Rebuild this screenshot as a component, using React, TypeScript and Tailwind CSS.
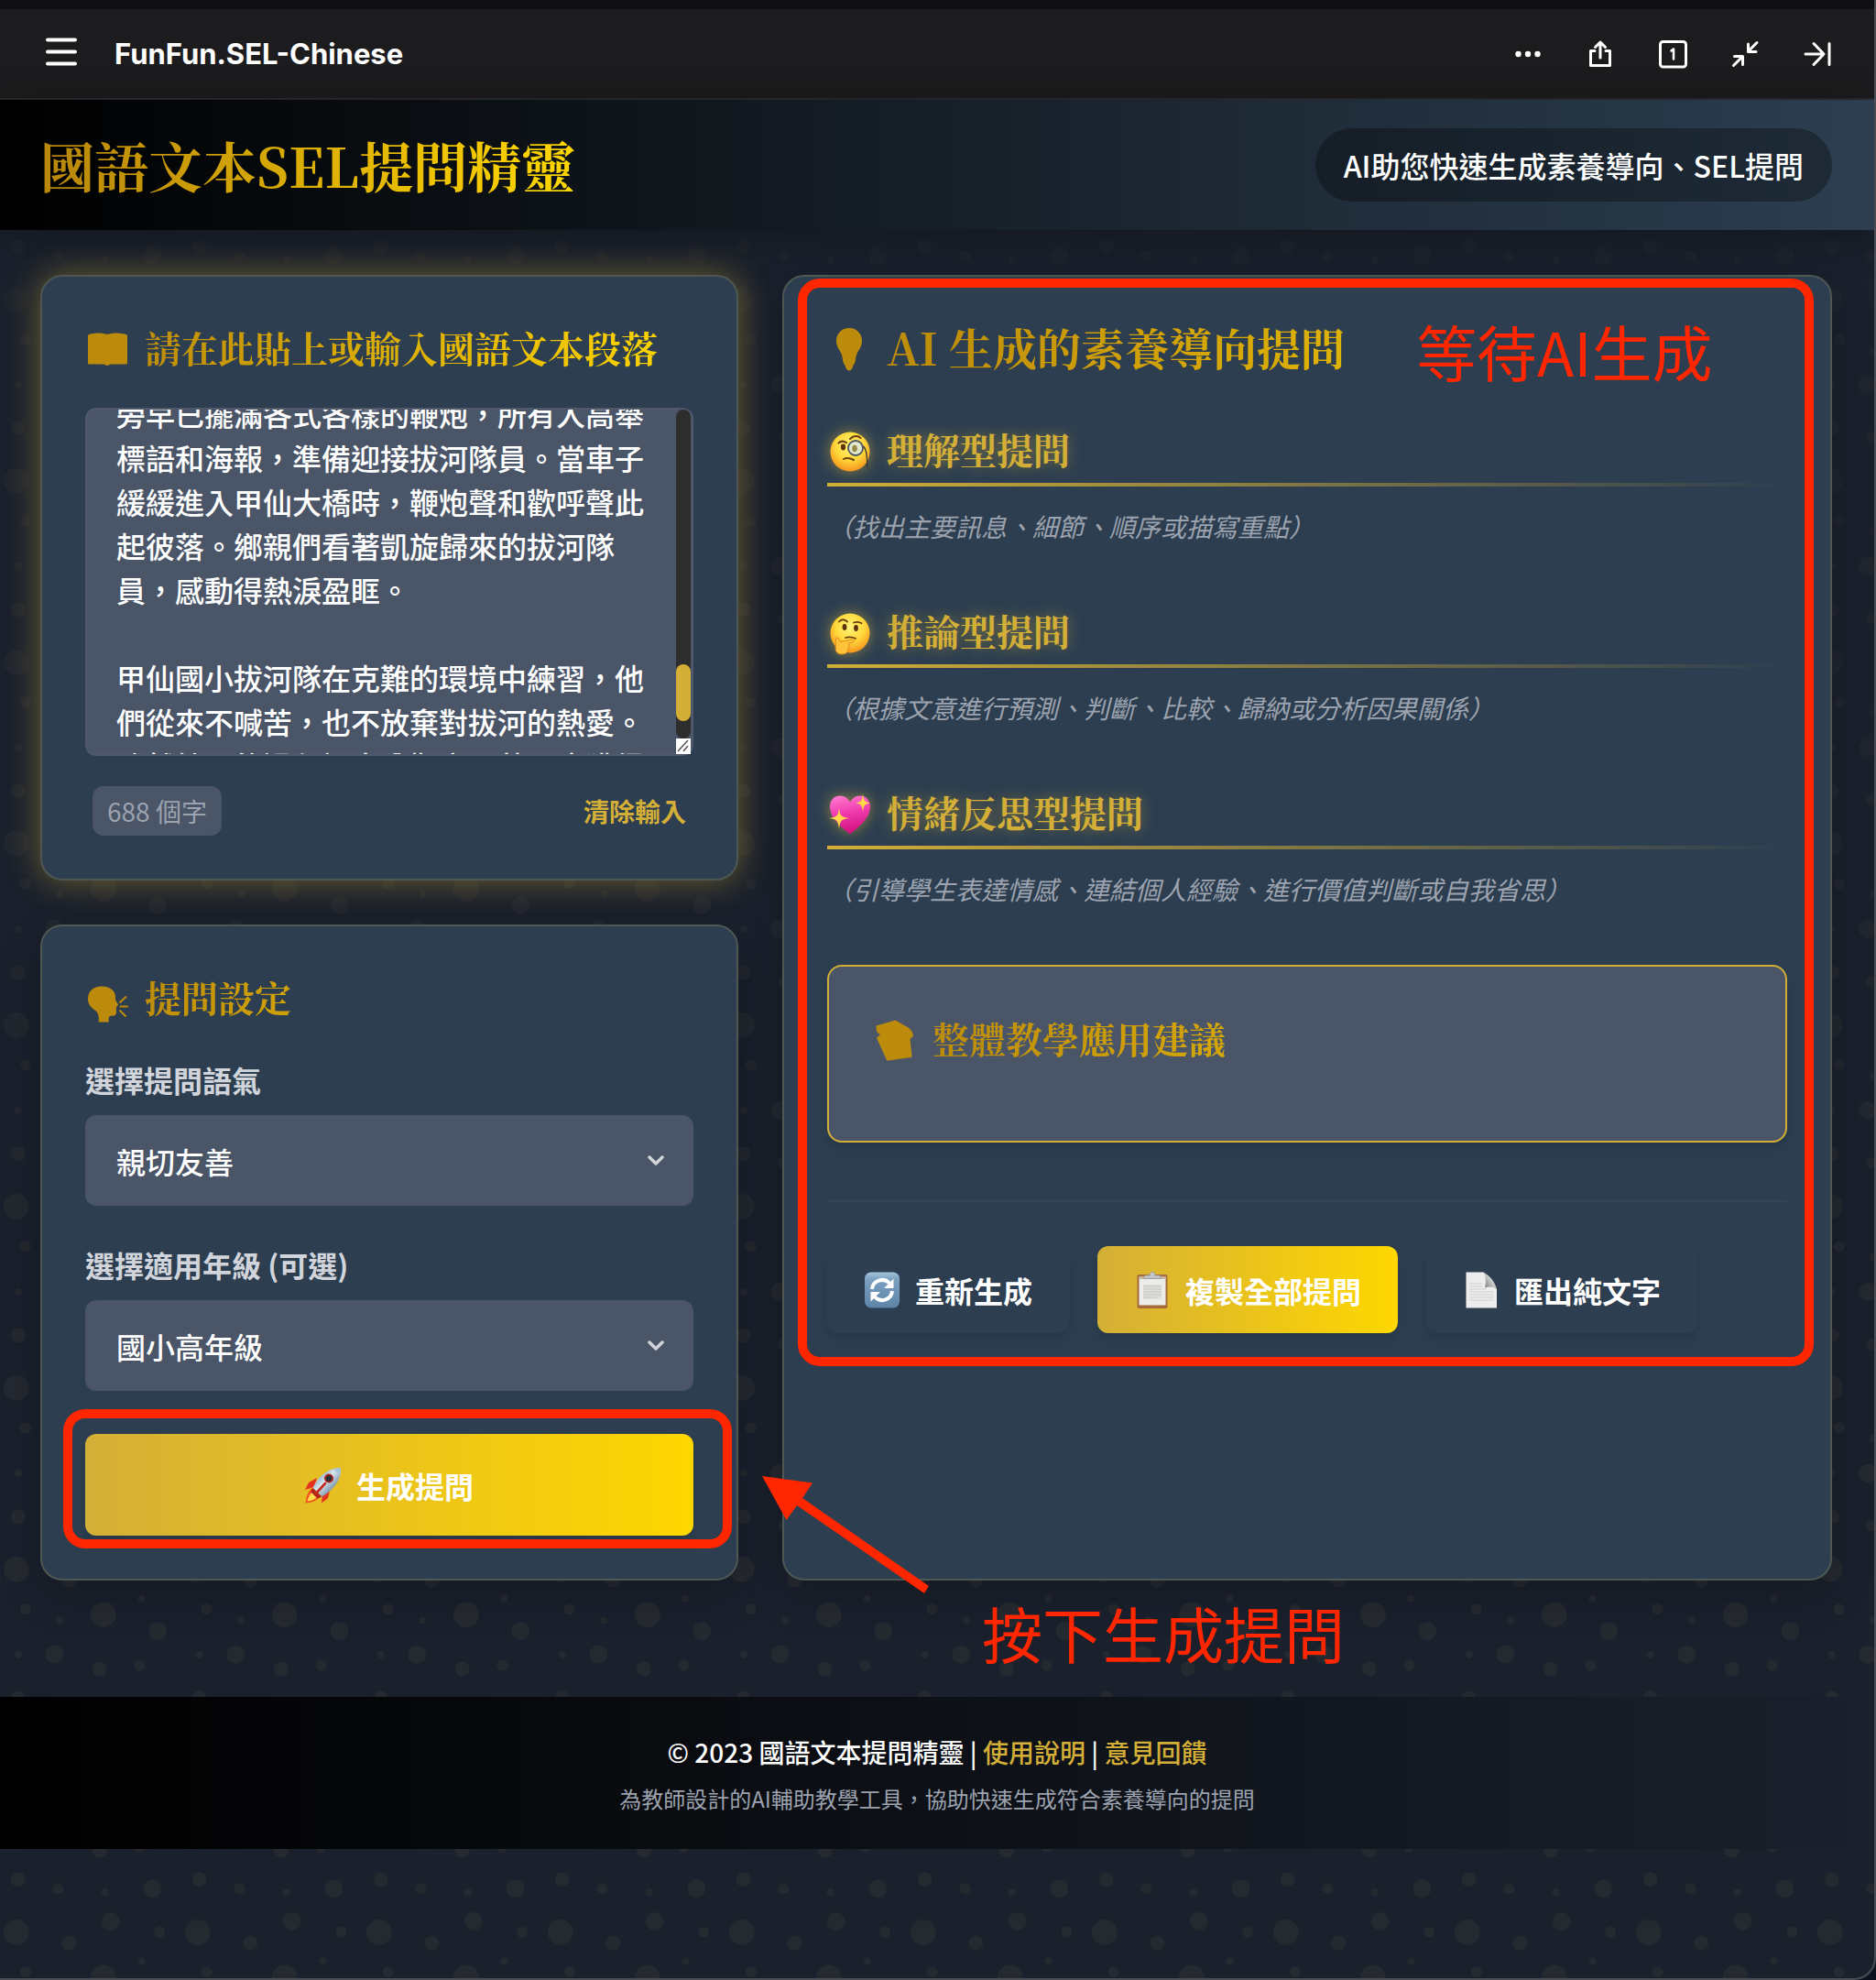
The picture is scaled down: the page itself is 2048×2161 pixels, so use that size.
import { useEffect, useRef, type ReactNode } from 'react';

const SANS = 'font-["Noto_Sans_CJK_TC",sans-serif]';
const SERIF = 'font-["Noto_Serif_CJK_TC","Liberation_Serif",serif]';

const PASSAGE = `旁早已擺滿各式各樣的鞭炮，所有人高舉標語和海報，準備迎接拔河隊員。當車子緩緩進入甲仙大橋時，鞭炮聲和歡呼聲此起彼落。鄉親們看著凱旋歸來的拔河隊員，感動得熱淚盈眶。

甲仙國小拔河隊在克難的環境中練習，他們從來不喊苦，也不放棄對拔河的熱愛。雖然練習的過程裡十分艱辛困苦，也獲得`;

/* ---------- decorative dots behind the page ---------- */

const DOTS: [number, number, number][] = [
  [11, 11, 7], [59, 36, 7], [16, 33, 3], [79, 64, 3], [34, 87, 3], [90, 11, 3],
  [12, 82, 4], [40, 17, 4], [63, 5, 5], [57, 66, 4], [86, 87, 5], [32, 58, 5],
  [89, 45, 5], [80, 27, 2], [60, 89, 2], [35, 39, 2], [12, 58, 2],
];

function Backdrop() {
  return (
    <svg
      className="absolute inset-0 -z-10 h-full w-full [mask-image:linear-gradient(to_bottom,rgba(0,0,0,0.4),black_75%)]"
      aria-hidden="true"
    >
      <defs>
        <pattern id="dots" x="-4" y="-2" width="198" height="198" patternUnits="userSpaceOnUse">
          <g transform="scale(1.98)" fill="#d4af70" fillOpacity="0.06">
            {DOTS.map(([x, y, r]) => (
              <circle key={`${x}-${y}`} cx={x} cy={y} r={r} />
            ))}
          </g>
        </pattern>
      </defs>
      <rect width="100%" height="100%" fill="url(#dots)" />
    </svg>
  );
}

/* ---------- toolbar icons ---------- */

function ToolIcon({ children }: { children: ReactNode }) {
  return (
    <svg
      viewBox="0 0 40 40"
      className="size-10"
      fill="none"
      stroke="#fff"
      strokeWidth="3"
      strokeLinecap="round"
      strokeLinejoin="round"
      aria-hidden="true"
    >
      {children}
    </svg>
  );
}

const TOOLS: { label: string; icon: ReactNode }[] = [
  {
    label: '更多',
    icon: (
      <g fill="#fff" stroke="none">
        <circle cx="9.500" cy="20" r="3.2" />
        <circle cx="20" cy="20" r="3.2" />
        <circle cx="30.500" cy="20" r="3.2" />
      </g>
    ),
  },
  {
    label: '分享',
    icon: <path d="M20 24V7M14.500 12.500 20 7l5.500 5.500M14 16.500H9.500V32.500H30.500V16.500H26" />,
  },
  {
    label: '分頁',
    icon: (
      <>
        <rect x="6.500" y="6.500" width="28" height="27.500" rx="3" />
        <path d="M18.500 16.500l2.500-2V25.500" strokeWidth="2.5" />
      </>
    ),
  },
  {
    label: '縮小',
    icon: <path d="M33 7.500 23.500 17M23.500 9v8.500H32M7.500 32.500 17 23M8.500 22.500H17.500V31.500" />,
  },
  {
    label: '收合',
    icon: <path d="M7 20H26M16 8.500 27 20 16 31.500M33 8.500V31.500" />,
  },
];

/* ---------- heading silhouettes ---------- */

function BookIcon() {
  return (
    <svg viewBox="0 0 48 48" className="size-12 shrink-0" fill="#bd8b0b" aria-hidden="true">
      <path d="M3 9.500c0-.8.5-1.300 1.300-1.500C10 6.500 17 6 22 7.500c.8.200 1.300.2 2 .2s1.300 0 2-.2c5-1.500 12-1 18.700.5.800.200 1.300.7 1.300 1.500V39c0 1-.6 1.500-1.600 1.500H28.500c-1 0-1.700.3-2.300.8-1.200.8-3.200.8-4.400 0-.6-.5-1.300-.8-2.300-.8H4.600C3.600 40.500 3 40 3 39z" />
    </svg>
  );
}

function BulbIcon() {
  return (
    <svg viewBox="0 0 48 48" className="size-12 shrink-0" fill="#bd8b0b" aria-hidden="true">
      <path d="M24 1c8 0 14 6 14 14 0 6-3.200 9.500-5 13-1.300 2.600-1.800 5.200-2.200 8.500-.2 2-.8 3.200-1.600 4.200-.7.900-1 1.400-1.200 2.400-.3 2.200-1.600 4.400-4 4.400s-3.700-2.200-4-4.400c-.2-1-.5-1.500-1.200-2.400-.8-1-1.400-2.200-1.600-4.200-.4-3.300-.9-5.900-2.200-8.500-1.800-3.500-5-7-5-13 0-8 6-14 14-14z" />
    </svg>
  );
}

function SpeakingIcon() {
  return (
    <svg viewBox="0 0 48 48" className="mt-3 size-12 shrink-0" fill="#bd8b0b" aria-hidden="true">
      <path d="M18 4.500c8.500 0 14.500 4 15 11 .1 1.700-.2 2.800.3 4.200.5 1.500 2.700 3.300 2.700 4.800 0 1-1.400 1.400-1.900 2 .4.700.3 1.400-.3 2 .5.700.4 1.300 0 2 .6 2.400.4 4.500-1.200 5.500-1.500.9-4.600.4-6 1.300-1.200.8-1 3.200-.8 6.200H14.500c.9-4.500.3-8.500-2.300-11.800C7.500 28.500 3 25 3 18 3 9.500 9.500 4.500 18 4.500z" />
      <path
        d="M38.500 26.500H46M38 22l6.500-6M38 31l6 6"
        stroke="#bd8b0b"
        strokeWidth="2"
        strokeLinecap="round"
      />
    </svg>
  );
}

function PapersIcon() {
  return (
    <svg viewBox="0 0 48 48" className="size-12 shrink-0" fill="#bd8b0b" aria-hidden="true">
      <path d="M3.500 8.500 24.500 2.500l14 8c3.500 2.500 5 5 5.500 9.500l-3.500 3 2 18.500c.1.800-.3 1.300-1 1.600L17 46.500c-1.200.3-2-.1-2.300-1.200L4.500 23c-.5-1-.3-1.800.5-2.300l3-2.200-3-2.500c-.8-.7-1-1.200-1.100-2z" />
    </svg>
  );
}

/* ---------- colour pictograms ---------- */

function Face({ children }: { children: ReactNode }) {
  return (
    <svg viewBox="0 0 48 48" className="mt-1 size-12 shrink-0 drop-shadow-[0_0_8px_rgba(212,175,55,0.6)]" aria-hidden="true">
      <defs>
        <radialGradient id="skin" cx="0.5" cy="0.35" r="0.65">
          <stop offset="0" stopColor="#fff27a" />
          <stop offset="0.55" stopColor="#ffd93b" />
          <stop offset="1" stopColor="#f7941d" />
        </radialGradient>
      </defs>
      <circle cx="25" cy="24" r="21.500" fill="url(#skin)" />
      {children}
    </svg>
  );
}

function MonocleFace() {
  return (
    <Face>
      <ellipse cx="17.500" cy="19" rx="2.600" ry="3.400" fill="#5c3410" />
      <path d="M12.500 14.500c2.500-2.500 5.500-2.300 8.500-.3" stroke="#6b3d12" strokeWidth="2" fill="none" strokeLinecap="round" />
      <path d="M25 10c4-4 9-3.500 11.500-1" stroke="#6b3d12" strokeWidth="2" fill="none" strokeLinecap="round" />
      <circle cx="31" cy="20" r="8" fill="#dfe9e0" fillOpacity="0.85" stroke="#4b5563" strokeWidth="1.800" />
      <ellipse cx="30" cy="20.500" rx="2.800" ry="3.800" fill="#9a8a4a" />
      <path d="M39.500 18c4 4 4.500 14 4 24" stroke="#3a3a34" strokeWidth="1.400" fill="none" />
      <path d="M18 32c3-1.800 7-1.200 11 1" stroke="#6b3d12" strokeWidth="2" fill="none" strokeLinecap="round" />
    </Face>
  );
}

function ThinkingFace() {
  return (
    <Face>
      <ellipse cx="19" cy="17.500" rx="2.400" ry="3.400" fill="#5c3410" />
      <ellipse cx="31.500" cy="18.500" rx="2.400" ry="3.400" fill="#5c3410" />
      <path d="M13 11.500c2.500-3 6-3 9 0M29 12.500c3-1 6-1 8.500.7" stroke="#6b3d12" strokeWidth="1.800" fill="none" strokeLinecap="round" />
      <path d="M20 29c4-1.200 7-1 11 .8" stroke="#6b3d12" strokeWidth="1.800" fill="none" strokeLinecap="round" />
      <path
        d="M9.500 30c.5-1.500 2.500-1.700 3.300.2l1.400 3.300 13.300-2.700c2.500-.4 3 2.400.8 3l-5.300 1.700c1.200.8 1.200 2 .5 3 .5 1 .3 2.200-.6 2.900.1 3.300-2.700 5.600-7 5.600-5 0-7-3-6.700-7.500z"
        fill="#ffc43a"
        stroke="#e08a1b"
        strokeWidth="1"
      />
    </Face>
  );
}

function SparklingHeart() {
  return (
    <svg viewBox="0 0 48 48" className="mt-1 size-12 shrink-0 drop-shadow-[0_0_8px_rgba(212,175,55,0.6)]" aria-hidden="true">
      <defs>
        <linearGradient id="heart" x1="0" y1="0" x2="0.2" y2="1">
          <stop offset="0" stopColor="#ff7ed0" />
          <stop offset="0.5" stopColor="#f03cb0" />
          <stop offset="1" stopColor="#d3127f" />
        </linearGradient>
      </defs>
      <path d="M25 45.500C16 38 3 28 3 15.500 3 8 8 3.500 14 3.500c5 0 9 2.800 11 7 2-4.200 6-7 11-7 6 0 11 4.500 11 12C47 28 34 38 25 45.500z" fill="url(#heart)" />
      <path d="M13 17c1 8.500 2.500 10 11 11-8.500 1-10 2.500-11 12-1-9.500-2.500-11-11-12 8.500-1 10-2.500 11-11z" fill="#ffd84a" />
      <path d="M39 1c.8 8 2 9.500 8 10.500-6 1-7.200 2.500-8 9.500-.8-7-2-8.500-8-9.500 6-1 7.200-2.500 8-10.500z" fill="#ffd84a" />
    </svg>
  );
}

function Rocket() {
  return (
    <svg viewBox="0 0 40 40" className="size-10 shrink-0" aria-hidden="true">
      <defs>
        <linearGradient id="hull" x1="0" y1="0" x2="1" y2="1">
          <stop offset="0.15" stopColor="#6f97b8" />
          <stop offset="0.45" stopColor="#dbe7f0" />
          <stop offset="0.85" stopColor="#4f7190" />
        </linearGradient>
      </defs>
      <path d="M13 12 4 17 0 25l10-3zM27 26l-2 8-7 5.500 1-9z" fill="#e3331f" />
      <path d="M8 23C3 27 1 33 .5 39.500 6 39 12 37.500 16 33z" fill="#f5531d" />
      <path d="M8.500 27C5 30 3.500 33 2.500 37.500 7 37 11 35.500 14 32z" fill="#ffdf4a" />
      <path d="M39 1c.8 10-4 21.500-20.500 31.500L8.500 23C14 10 26 1 39 1z" fill="url(#hull)" />
      <path d="M39 1c.2 2.600 0 5-.8 8L30.500 2.300C33 1.400 36 1 39 1z" fill="#a9c4d8" />
      <path d="M8.500 23l10 9.500-5 2L6 27z" fill="#b3271a" />
      <circle cx="26" cy="12.500" r="5" fill="#b4251c" />
      <circle cx="26" cy="12.500" r="3.200" fill="#26303b" />
      <path d="M22 18 11 30" stroke="#c22a1c" strokeWidth="2.600" strokeLinecap="round" />
    </svg>
  );
}

function RefreshTile() {
  return (
    <svg viewBox="0 0 40 40" className="size-10 shrink-0" aria-hidden="true">
      <defs>
        <linearGradient id="tile" x1="0" y1="0" x2="0" y2="1">
          <stop offset="0" stopColor="#a5c4dc" />
          <stop offset="0.2" stopColor="#7ba0c0" />
          <stop offset="1" stopColor="#5d83a6" />
        </linearGradient>
      </defs>
      <rect x="1" y="0.500" width="38" height="39" rx="7" fill="url(#tile)" />
      <path d="M9 19A11 11 0 0 1 28 12.500M31 21A11 11 0 0 1 12 27.500" fill="none" stroke="#fff" strokeWidth="4" />
      <path d="M32.500 7.500V18H22zM7.500 32.500V22H18z" fill="#fff" />
    </svg>
  );
}

function Clipboard() {
  return (
    <svg viewBox="0 0 40 40" className="size-10 shrink-0" aria-hidden="true">
      <rect x="3.500" y="3" width="33" height="37" rx="2" fill="#a5693a" />
      <path d="M5.500 5.500h29V36.500h-29z" fill="#ececea" />
      <path d="M10 14h20v16H10z" fill="#dededc" />
      <path d="M10 16h20M10 19h20M10 22h20M10 25h20M10 28h14" stroke="#c6c6c4" strokeWidth="1" />
      <path d="M5.500 5.500h29V8h-29z" fill="#c9b8a6" />
      <path d="M11 7.500V5.500c0-1 .6-1.500 1.500-1.500H17c.5-2.500 1.500-4 3-4s2.500 1.500 3 4h4.500c.9 0 1.500.5 1.500 1.500v2z" fill="#c3c7cb" stroke="#8f9397" strokeWidth="0.800" />
    </svg>
  );
}

function PageSheet() {
  return (
    <svg viewBox="0 0 40 40" className="size-10 shrink-0" aria-hidden="true">
      <defs>
        <linearGradient id="fold" x1="0" y1="1" x2="0.8" y2="0.200">
          <stop offset="0" stopColor="#6e7276" />
          <stop offset="1" stopColor="#f4f4f4" />
        </linearGradient>
      </defs>
      <path d="M3.500.500H22.500L37 19V39.500H3.500z" fill="#ededed" />
      <path d="M7 13h14M7 16h15M7 19h18M7 22h26M7 25h26M7 28h26M7 31h26" stroke="#cfcfcf" strokeWidth="1.200" />
      <path d="M22.500.500C25 6 25.500 10 24 17.500c5-1.500 9-1.500 13 1.500C35 11 29 4 22.500.500z" fill="url(#fold)" />
    </svg>
  );
}

/* ---------- building blocks ---------- */

function Card({ glow = false, children }: { glow?: boolean; children: ReactNode }) {
  return (
    <section
      className={`rounded-3xl border-2 border-[#4e5752] bg-[#2c3e50] p-[47px] ${
        glow ? 'shadow-[0_0_36px_rgba(212,175,55,0.45)]' : 'shadow-[0_16px_48px_rgba(0,0,0,0.2)]'
      }`}
    >
      {children}
    </section>
  );
}

function Heading({ icon, large = false, children }: { icon: ReactNode; large?: boolean; children: ReactNode }) {
  return (
    <h2 className="flex h-16 items-center gap-[17px]">
      {icon}
      <span className="-ml-[65px] flex-1 bg-linear-to-r/srgb from-[#b8860b] to-[#ffd700] bg-clip-text pb-1 pl-[65px] text-transparent">
        <span className={`${SERIF} font-bold ${large ? 'text-[48px] leading-[64px]' : 'text-[40px] leading-[64px]'}`}>
          {children}
        </span>
      </span>
    </h2>
  );
}

function Section({ icon, title, hint }: { icon: ReactNode; title: string; hint: string }) {
  return (
    <section>
      <h3
        className={`${SERIF} flex h-[62px] items-start gap-[17px] text-[40px] leading-[50px] font-bold text-[#d4af37] [text-shadow:0_0_16px_rgba(212,175,55,0.5)]`}
      >
        {icon}
        {title}
      </h3>
      <div className="h-1 bg-linear-to-r/srgb from-[#d4af37] to-[#d4af37]/0" />
      <p className="mt-[22px] text-[28px] leading-[42px] text-[#9ca3af] italic">{hint}</p>
    </section>
  );
}

function Picker({ id, label, options }: { id: string; label: string; options: string[] }) {
  return (
    <div>
      <label htmlFor={id} className="block text-[32px] leading-[48px] font-bold text-[#d1d5db]">
        {label}
      </label>
      <div className="relative mt-[15px]">
        <select
          id={id}
          className="block h-[99px] w-full appearance-none rounded-xl bg-[#4a5568] px-[34px] text-[32px] font-medium text-white"
        >
          {options.map((o) => (
            <option key={o}>{o}</option>
          ))}
        </select>
        <svg
          viewBox="0 0 20 12"
          className="pointer-events-none absolute top-11 right-[31px] h-3 w-5"
          fill="none"
          stroke="#d1d5db"
          strokeWidth="3.500"
          strokeLinecap="round"
          strokeLinejoin="round"
          aria-hidden="true"
        >
          <path d="M3 2l7 7 7-7" />
        </svg>
      </div>
    </div>
  );
}

function PassageInput() {
  const ref = useRef<HTMLTextAreaElement>(null);
  useEffect(() => {
    if (ref.current) ref.current.scrollTop = 52;
  }, []);
  return (
    <div className="relative mt-8">
      <textarea
        ref={ref}
        aria-label="國語文本段落"
        defaultValue={PASSAGE}
        className="block h-[380px] w-full resize-none overflow-hidden rounded-xl border-2 border-[#4f596b] bg-[#4a5568] py-8 pr-[50px] pl-8 text-[32px] leading-[48px] font-medium text-white"
      />
      <div className="absolute inset-y-0.5 right-[3px] flex w-4 flex-col" aria-hidden="true">
        <div className="flex flex-1 flex-col rounded-full bg-[#2d2d2d] pt-[278px]">
          <div className="h-[62px] rounded-full bg-[#d4af37]" />
        </div>
        <svg viewBox="0 0 16 17" className="h-[17px] w-4 bg-white">
          <path d="M2 14 13 2M8 14l5-6" stroke="#555" strokeWidth="1.500" />
        </svg>
      </div>
    </div>
  );
}

function ActionButton({ icon, gold = false, children }: { icon: ReactNode; gold?: boolean; children: ReactNode }) {
  return (
    <button
      type="button"
      className={`flex h-[95px] items-center gap-4 rounded-xl px-10 text-[32px] font-bold text-white shadow-[0_8px_12px_rgba(0,0,0,0.1)] ${
        gold ? 'bg-linear-to-r/srgb from-[#d4af37] to-[#ffd700]' : 'bg-[#2c3e50]'
      }`}
    >
      {icon}
      {children}
    </button>
  );
}

/* ---------- page ---------- */

export default function App() {
  return (
    <div className={`${SANS} bg-[#0c1220]`}>
      <div className="relative flex min-h-screen flex-col overflow-hidden rounded-br-3xl border-r-2 border-b-2 border-[#4a4c54] bg-[#1a202c] text-white">
        <div className="border-b-2 border-[#2a2a2f] bg-[#1c1c1e]">
          <div className="h-2.5 bg-[#101012]" />
          <div className="flex h-[97px] items-center pr-[42px] pl-[49px]">
            <button type="button" aria-label="選單">
              <svg viewBox="0 0 36 36" className="size-9" stroke="#fff" strokeWidth="4" strokeLinecap="round" aria-hidden="true">
                <path d="M3 2.500H33M3 15.500H33M3 28.500H33" />
              </svg>
            </button>
            <span className="ml-10 flex-1 font-[Inter,sans-serif] text-[31px] leading-10 font-bold">
              FunFun.SEL-Chinese
            </span>
            <div className="flex gap-[39px]">
              {TOOLS.map((t) => (
                <button key={t.label} type="button" aria-label={t.label}>
                  <ToolIcon>{t.icon}</ToolIcon>
                </button>
              ))}
            </div>
          </div>
        </div>

        <div className="relative isolate flex flex-1 flex-col">
          <Backdrop />

          <header className="flex items-center justify-between bg-linear-to-r/srgb from-black to-[#2c3e50] py-[31px] pr-[46px] pl-11 shadow-[0_8px_40px_rgba(0,0,0,0.3)]">
            <h1
              className={`${SERIF} bg-linear-to-r/srgb from-[#b8860b] to-[#ffd700] bg-clip-text text-[59px] leading-[80px] font-bold text-transparent`}
            >
              國語文本SEL提問精靈
            </h1>
            <p className="rounded-full bg-black/30 px-[31px] py-4 text-[32px] leading-[48px] font-medium">
              AI助您快速生成素養導向、SEL提問
            </p>
          </header>

          <main className="grid grid-cols-[762fr_1146fr] gap-12 pt-[49px] pr-[46px] pl-11">
            <div className="flex flex-col gap-12">
              <Card glow>
                <Heading icon={<BookIcon />}>請在此貼上或輸入國語文本段落</Heading>
                <PassageInput />
                <div className="mt-[33px] flex items-center justify-between px-2">
                  <span className="rounded-xl bg-[#4a5568] px-4 py-1.5 text-[28px] leading-[42px] text-[#9ca3af]">
                    688 個字
                  </span>
                  <button type="button" className="text-[28px] leading-[42px] font-bold text-[#d4af37]">
                    清除輸入
                  </button>
                </div>
              </Card>

              <Card>
                <Heading icon={<SpeakingIcon />}>提問設定</Heading>
                <div className="mt-8 flex flex-col gap-10">
                  <Picker id="tone" label="選擇提問語氣" options={['親切友善']} />
                  <Picker id="grade" label="選擇適用年級 (可選)" options={['國小高年級']} />
                </div>
                <div className="relative mt-[47px]">
                  <button
                    type="button"
                    className="flex h-[111px] w-full items-center justify-center gap-4 rounded-xl bg-linear-to-r/srgb from-[#d4af37] to-[#ffd700] text-[32px] font-bold text-white shadow-[0_8px_12px_rgba(0,0,0,0.1)]"
                  >
                    <Rocket />
                    生成提問
                  </button>
                  <div className="pointer-events-none absolute -top-[27px] -right-[42px] -bottom-3.5 -left-6 rounded-3xl border-[10px] border-[#ff2600]" />
                </div>
              </Card>
            </div>

            <div className="relative flex flex-col *:first:flex-1">
              <Card>
                <Heading large icon={<BulbIcon />}>
                  AI 生成的素養導向提問
                </Heading>
                <div className="mt-[52px] flex flex-col gap-[68px]">
                  <Section icon={<MonocleFace />} title="理解型提問" hint="（找出主要訊息、細節、順序或描寫重點）" />
                  <Section
                    icon={<ThinkingFace />}
                    title="推論型提問"
                    hint="（根據文意進行預測、判斷、比較、歸納或分析因果關係）"
                  />
                  <Section
                    icon={<SparklingHeart />}
                    title="情緒反思型提問"
                    hint="（引導學生表達情感、連結個人經驗、進行價值判斷或自我省思）"
                  />
                </div>
                <div className="mt-[62px] rounded-2xl border-2 border-[#d4af37] bg-[#4a5568] px-12 pt-12 pb-[78px] shadow-[0_8px_12px_rgba(0,0,0,0.1)]">
                  <Heading icon={<PapersIcon />}>整體教學應用建議</Heading>
                </div>
                <div className="mt-[63px] flex gap-[31px] border-t-2 border-[#384353] pt-12">
                  <ActionButton icon={<RefreshTile />}>重新生成</ActionButton>
                  <ActionButton gold icon={<Clipboard />}>
                    複製全部提問
                  </ActionButton>
                  <ActionButton icon={<PageSheet />}>匯出純文字</ActionButton>
                </div>
              </Card>

              {/* hand-drawn notes on top of the page */}
              <div className="pointer-events-none absolute top-1 right-5 left-[17px] h-[1187px] rounded-3xl border-[10px] border-[#ff2600]" />
              <p className="absolute top-11 left-[692px] text-[66px] leading-[76px] whitespace-nowrap text-[#ff2600]">
                等待AI生成
              </p>
              <svg
                viewBox="0 0 184 130"
                className="absolute -bottom-4 -left-[22px] h-[130px] w-[184px]"
                fill="#ff2600"
                aria-hidden="true"
              >
                <path d="M0 0 55 7.500 44 24 182 120l-5 8L38 32 26.500 48z" />
              </svg>
              <p className="absolute top-full left-[218px] mt-[18px] text-[66px] leading-[76px] whitespace-nowrap text-[#ff2600]">
                按下生成提問
              </p>
            </div>
          </main>

          <footer className="mt-[127px] bg-linear-to-r/srgb from-black to-[#1a202c] pt-[39px] pb-[37px] text-center">
            <p className="text-[28px] leading-[42px] font-medium">
              © 2023 國語文本提問精靈 |{' '}
              <a href="#guide" className="text-[#d4af37]">
                使用說明
              </a>{' '}
              |{' '}
              <a href="#feedback" className="text-[#d4af37]">
                意見回饋
              </a>
            </p>
            <p className="mt-3 text-[24px] leading-9 text-[#9ca3af]">
              為教師設計的AI輔助教學工具，協助快速生成符合素養導向的提問
            </p>
          </footer>
        </div>
      </div>
    </div>
  );
}
